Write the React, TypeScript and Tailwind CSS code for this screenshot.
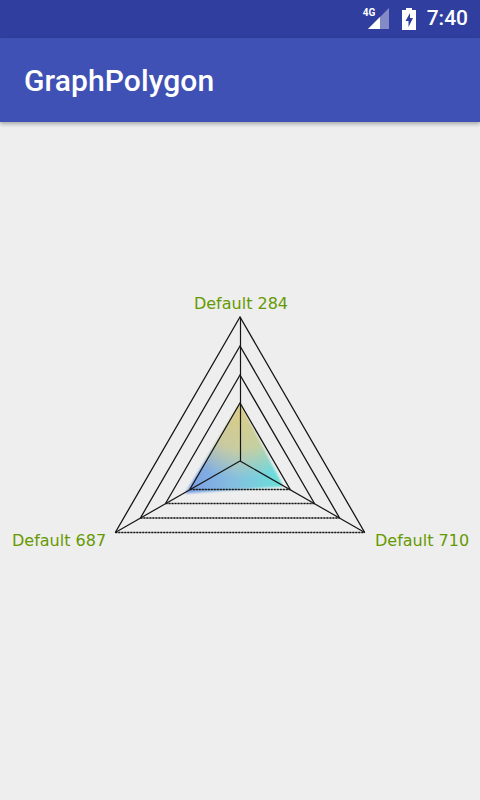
const CX = 240;
const CY = 339;
const RADII = [144, 115, 86, 58];
const LINE = "#161616";

const DATA = "240,281 283.5,364.5 185,371.5";

function PolygonGraph() {
  return (
    <svg width="480" height="678" viewBox="0 0 480 678" className="block">
      <defs>
        <linearGradient id="base" gradientUnits="userSpaceOnUse" x1="188" y1="0" x2="283" y2="0">
          <stop offset="0" stopColor="#7c9fe4" />
          <stop offset="0.5" stopColor="#85bfe0" />
          <stop offset="1" stopColor="#68e2da" />
        </linearGradient>
        <radialGradient id="top" gradientUnits="userSpaceOnUse" cx="240" cy="281" r="76">
          <stop offset="0" stopColor="#dccb80" />
          <stop offset="0.6" stopColor="#dcd08e" stopOpacity="0.78" />
          <stop offset="1" stopColor="#d8d49c" stopOpacity="0" />
        </radialGradient>
        <filter id="soft" x="-10%" y="-10%" width="120%" height="120%">
          <feGaussianBlur stdDeviation="0.8" />
        </filter>
      </defs>

      <g filter="url(#soft)">
        <polygon points={DATA} fill="url(#base)" />
        <polygon points={DATA} fill="url(#top)" />
      </g>

      {RADII.map((r) => {
        const dx = r * 0.866;
        const y = CY + r / 2 - 0.5;
        return (
          <g key={r} stroke={LINE} fill="none">
            <path d={`M${CX - dx} ${y}L${CX} ${CY - r}L${CX + dx} ${y}`} strokeWidth="1.3" />
            {/* bottom edges come out speckled in the reference */}
            <line x1={CX - dx} y1={y} x2={CX + dx} y2={y} strokeWidth="1" strokeOpacity="0.3" />
            <line x1={CX - dx} y1={y} x2={CX + dx} y2={y} strokeWidth="1.4" strokeDasharray="2 1" />
          </g>
        );
      })}
      <g stroke={LINE} strokeWidth="1.2">
        <line x1={240.5} y1={CY} x2={240.5} y2={CY - 144} />
        <line x1={CX} y1={CY} x2={CX + 124.7} y2={CY + 71.5} />
        <line x1={CX} y1={CY} x2={CX - 124.7} y2={CY + 71.5} />
      </g>

      <g fill="#669900" fontSize="16" style={{ fontFamily: '"DejaVu Sans", sans-serif' }}>
        <text x="241" y="187" textAnchor="middle">Default 284</text>
        <text x="12" y="424">Default 687</text>
        <text x="375" y="424">Default 710</text>
      </g>
    </svg>
  );
}

export default function App() {
  return (
    <div className="flex h-[800px] w-[480px] flex-col overflow-hidden bg-[#eeeeee] font-['Roboto',sans-serif]">
      <div className="flex h-[38px] items-center justify-end bg-[#303f9f] pr-3 text-white">
        <div className="relative mr-[13px] h-[22px] w-[26px]">
          <span className="absolute -top-[1px] left-0 text-[10px] leading-[12px] font-bold">4G</span>
          <svg width="26" height="22" viewBox="0 0 26 22" className="absolute inset-0">
            <polygon points="26,0 26,21 5,21" fill="#fff" fillOpacity="0.4" />
            <polygon points="17,9 17,21 5,21" fill="#fff" />
          </svg>
        </div>
        <svg width="14" height="22" viewBox="0 0 14 22" className="mr-[11px]">
          <path d="M4 0h6v2h4v20H0V2h4z M8 5L3.5 13H6.5V19L11 10H8z" fill="#fff" fillRule="evenodd" />
        </svg>
        <span className="text-[21px] font-medium">7:40</span>
      </div>
      <div className="z-10 flex h-[84px] items-center bg-[#3f51b5] pl-6 shadow-[0_2px_4px_rgba(0,0,0,0.3)]">
        <span className="text-[30px] font-medium tracking-[0.1px] text-white">GraphPolygon</span>
      </div>
      <div className="flex flex-1 items-center justify-center">
        <PolygonGraph />
      </div>
    </div>
  );
}
